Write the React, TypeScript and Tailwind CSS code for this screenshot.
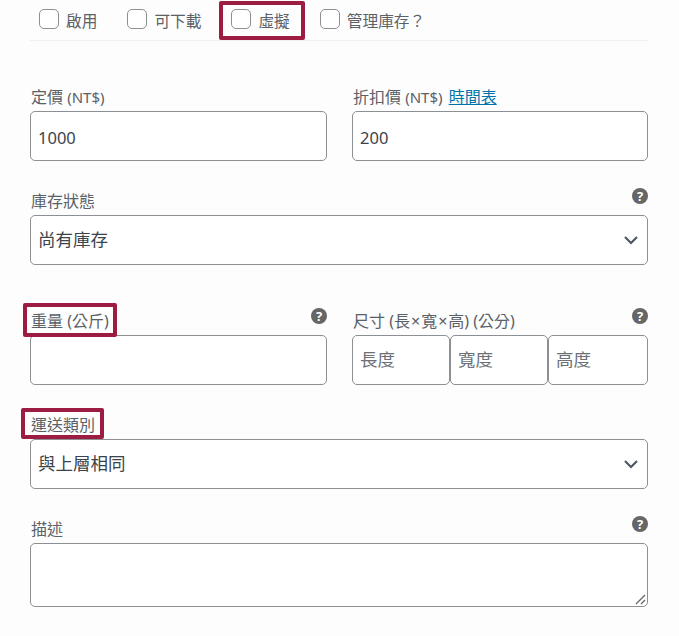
import type { ReactNode } from 'react';

const font = { fontFamily: '"Noto Sans", "Noto Sans CJK TC", sans-serif' };

const inputClass =
  'w-full h-[50px] bg-white border border-[#8c8f94] rounded-[5px] px-[7px] text-[#3c434a] placeholder:text-[#6b7177] outline-none';

const Help = () => (
  <span className="w-4 h-4 rounded-full bg-[#666666] text-white text-[13px] font-bold leading-4 text-center shrink-0">?</span>
);

const Check = ({ label }: { label: string }) => (
  <label className="flex items-center gap-[7px] h-10 text-[#5a6167] text-[15.7px]">
    <input type="checkbox" className="appearance-none w-5 h-5 rounded-[5px] border border-[#8c8f94] bg-white -mt-[2px]" />
    <span className="mt-[3px]">{label}</span>
  </label>
);

const FieldLabel = ({ children, help }: { children: ReactNode; help?: boolean }) => (
  <div className="h-[27px] flex justify-between items-start text-[#5a6167] text-base leading-[27px]">
    <span className="pl-px">{children}</span>
    {help && <Help />}
  </div>
);

const Select = ({ value }: { value: string }) => (
  <div className="relative">
    <select defaultValue={value} className={`${inputClass} appearance-none text-[17.5px] pb-[2px]`}>
      <option>{value}</option>
    </select>
    <svg width="16" height="10" viewBox="0 0 16 10" fill="none" className="absolute right-[9px] top-[20px] pointer-events-none">
      <path d="M2 2l6 6 6-6" stroke="#50575e" strokeWidth="2.2" />
    </svg>
  </div>
);

const Mark = ({ className }: { className: string }) => (
  <div className={`absolute border-4 border-[#9c1c42] rounded-[2px] pointer-events-none ${className}`} />
);

export default function App() {
  return (
    <div className="relative min-h-[636px] w-[679px] bg-[#fdfdfd] pl-[30px] pr-[31px]" style={font}>
      <div className="flex gap-[30px] pl-[9px] h-[41px] border-b border-[#f0f0f1]">
        <Check label="啟用" />
        <Check label="可下載" />
        <Check label="虛擬" />
        <Check label="管理庫存？" />
      </div>

      <div className="grid grid-cols-[297px_296px] gap-x-[25px] mt-[43px]">
        <div>
          <FieldLabel>定價 <span className="text-[15px]">(NT$)</span></FieldLabel>
          <input className={`${inputClass} text-[16.5px] pt-[2px]`} defaultValue="1000" />
        </div>
        <div>
          <FieldLabel>
            折扣價 <span className="text-[15px]">(NT$)</span> <a href="#" className="text-[#0073aa] underline ml-[2px]">時間表</a>
          </FieldLabel>
          <input className={`${inputClass} text-[16.5px] pt-[2px]`} defaultValue="200" />
        </div>
      </div>

      <div className="mt-[27px]">
        <FieldLabel help>庫存狀態</FieldLabel>
        <Select value="尚有庫存" />
      </div>

      <div className="grid grid-cols-[297px_296px] gap-x-[25px] mt-[43px]">
        <div>
          <FieldLabel help>重量 (公斤)</FieldLabel>
          <input className={`${inputClass} text-[17.5px]`} />
        </div>
        <div>
          <FieldLabel help>
            尺寸 (長<span className="px-px">×</span>寬<span className="px-px">×</span>高) (公分)
          </FieldLabel>
          <div className="flex">
            <input className={`${inputClass} text-[17.5px] pb-[2px] !w-[98px]`} placeholder="長度" />
            <input className={`${inputClass} text-[17.5px] pb-[2px] !w-[98px]`} placeholder="寬度" />
            <input className={`${inputClass} text-[17.5px] pb-[2px] !w-[100px]`} placeholder="高度" />
          </div>
        </div>
      </div>

      <div className="mt-[27px]">
        <FieldLabel>運送類別</FieldLabel>
        <Select value="與上層相同" />
      </div>

      <div className="mt-[27px]">
        <FieldLabel help>描述</FieldLabel>
        <div className="relative">
          <textarea className={`${inputClass} !h-16 block resize-none text-[17.5px]`} />
          <svg width="11" height="11" viewBox="0 0 11 11" fill="none" className="absolute right-[2px] bottom-[2px] pointer-events-none">
            <path d="M1 10l9-9M6 10l4-4" stroke="#666666" strokeWidth="1.3" />
          </svg>
        </div>
      </div>

      <Mark className="left-[219px] top-[1px] w-[86px] h-[39px]" />
      <Mark className="left-[23px] top-[303px] w-[94px] h-[34px]" />
      <Mark className="left-[21px] top-[408px] w-[83px] h-[31px]" />
    </div>
  );
}
